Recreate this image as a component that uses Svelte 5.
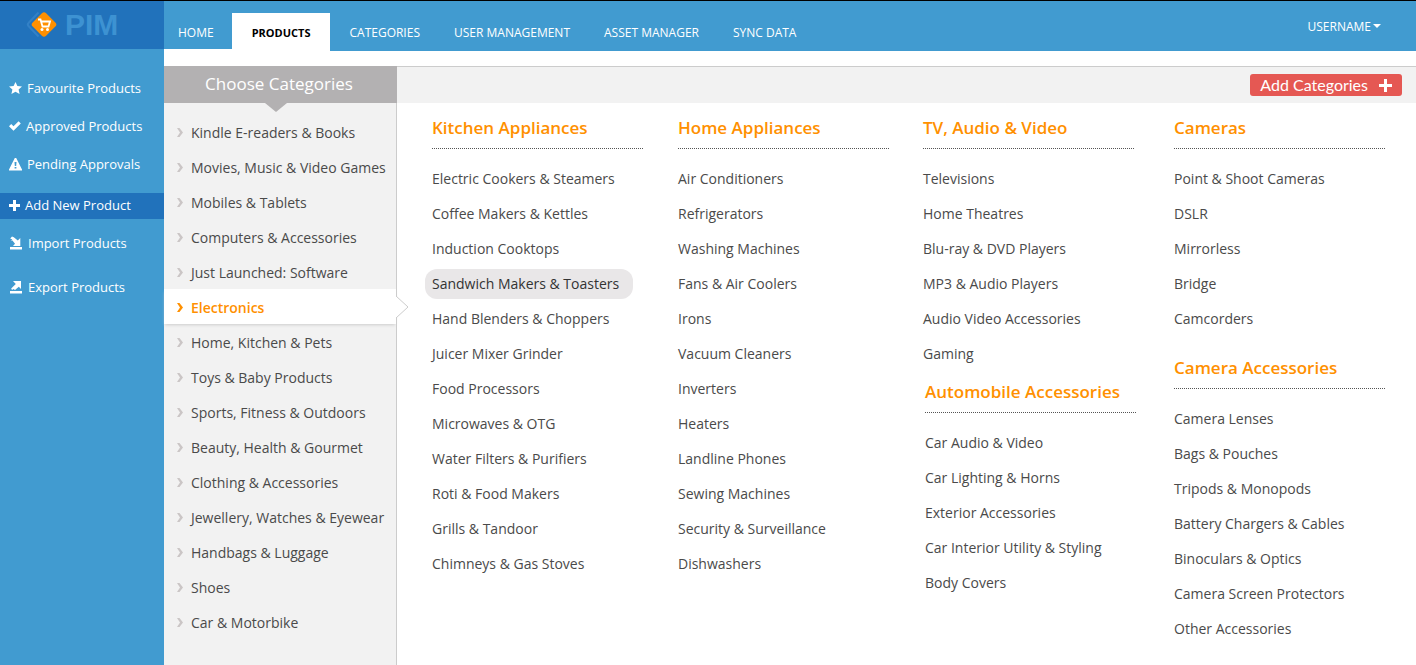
<script>
  const nav = ['HOME', 'PRODUCTS', 'CATEGORIES', 'USER MANAGEMENT', 'ASSET MANAGER', 'SYNC DATA'];
  const currentTab = 'PRODUCTS';

  const shortcutGroups = [
    [
      { icon: 'star', label: 'Favourite Products' },
      { icon: 'check', label: 'Approved Products' },
      { icon: 'warning', label: 'Pending Approvals' }
    ],
    [
      { icon: 'plus', label: 'Add New Product', active: true },
      { icon: 'import', label: 'Import Products' }
    ],
    [{ icon: 'export', label: 'Export Products' }]
  ];

  const categories = [
    'Kindle E-readers & Books',
    'Movies, Music & Video Games',
    'Mobiles & Tablets',
    'Computers & Accessories',
    'Just Launched: Software',
    'Electronics',
    'Home, Kitchen & Pets',
    'Toys & Baby Products',
    'Sports, Fitness & Outdoors',
    'Beauty, Health & Gourmet',
    'Clothing & Accessories',
    'Jewellery, Watches & Eyewear',
    'Handbags & Luggage',
    'Shoes',
    'Car & Motorbike'
  ];
  let selected = $state('Electronics');

  const columns = [
    [
      {
        title: 'Kitchen Appliances',
        items: [
          'Electric Cookers & Steamers', 'Coffee Makers & Kettles', 'Induction Cooktops',
          'Sandwich Makers & Toasters', 'Hand Blenders & Choppers', 'Juicer Mixer Grinder',
          'Food Processors', 'Microwaves & OTG', 'Water Filters & Purifiers',
          'Roti & Food Makers', 'Grills & Tandoor', 'Chimneys & Gas Stoves'
        ]
      }
    ],
    [
      {
        title: 'Home Appliances',
        items: [
          'Air Conditioners', 'Refrigerators', 'Washing Machines', 'Fans & Air Coolers', 'Irons',
          'Vacuum Cleaners', 'Inverters', 'Heaters', 'Landline Phones', 'Sewing Machines',
          'Security & Surveillance', 'Dishwashers'
        ]
      }
    ],
    [
      {
        title: 'TV, Audio & Video',
        items: [
          'Televisions', 'Home Theatres', 'Blu-ray & DVD Players', 'MP3 & Audio Players',
          'Audio Video Accessories', 'Gaming'
        ]
      },
      {
        title: 'Automobile Accessories',
        tight: true,
        items: [
          'Car Audio & Video', 'Car Lighting & Horns', 'Exterior Accessories',
          'Car Interior Utility & Styling', 'Body Covers'
        ]
      }
    ],
    [
      {
        title: 'Cameras',
        items: ['Point & Shoot Cameras', 'DSLR', 'Mirrorless', 'Bridge', 'Camcorders']
      },
      {
        title: 'Camera Accessories',
        items: [
          'Camera Lenses', 'Bags & Pouches', 'Tripods & Monopods', 'Battery Chargers & Cables',
          'Binoculars & Optics', 'Camera Screen Protectors', 'Other Accessories'
        ]
      }
    ]
  ];
  const highlighted = 'Sandwich Makers & Toasters';
</script>

{#snippet icon(name)}
  {#if name === 'star'}
    <svg width="13" height="12" viewBox="0 0 13 12"><path d="M6.5 0 8.4 3.9 13 4.4 9.6 7.5 10.6 12 6.5 9.8 2.4 12 3.4 7.5 0 4.4 4.6 3.9Z" /></svg>
  {:else if name === 'check'}
    <svg width="12" height="12" viewBox="0 0 12 12"><path d="M0 6.3 2.2 4.1 4.5 6.3 9.6 1.3 11.8 3.500 4.5 10.800Z" /></svg>
  {:else if name === 'warning'}
    <svg width="13" height="13" viewBox="0 0 13 13"><path fill-rule="evenodd" d="M5.800 0H7.200L13 11.500V12.500H0V11.500ZM5.500 4 5.800 8H7.200L7.500 4ZM5.600 9V10.600H7.400V9Z" /></svg>
  {:else if name === 'plus'}
    <svg width="11" height="11" viewBox="0 0 11 11"><path d="M4 0H7V4H11V7H7V11H4V7H0V4H4Z" /></svg>
  {:else if name === 'import'}
    <svg width="14" height="14" viewBox="0 0 14 14"><path d="M1 11H13V13.500H1ZM3 .5 4.800 1.300 8.800 4.600 11.300 2V10H4L6 7.800 3.500 4.500 2 4.800 3.300 3.400 1.200 2.600Z" /></svg>
  {:else}
    <svg width="14" height="14" viewBox="0 0 14 14"><path d="M1 11H13V13.500H1ZM4 1H12V9L9.800 6.800 6 10 4.500 9 3 10 2.200 8.500 6.800 3.900Z" /></svg>
  {/if}
{/snippet}

<div class="app">
  <aside class="sidebar">
    <a class="logo" href="#home">
      <svg width="36" height="30" viewBox="0 0 36 30" aria-hidden="true">
        <path d="M12.500 2.500 2.500 13Q1 14.500 2.500 16L12.500 26.500" fill="none" stroke="#3381c6" stroke-width="2" />
        <rect x="8.500" y="5" width="19" height="19" rx="3" transform="rotate(45 18 14.500)" fill="#ff9000" />
        <path d="M12 9.500H14.500L16.500 16.500H22.500L24 11.500H15.500" fill="none" stroke="#fff" stroke-width="1.800" />
        <circle cx="16" cy="19.500" r="1.500" fill="#fff" /><circle cx="21.500" cy="19.500" r="1.500" fill="#fff" />
      </svg>
      <span>PIM</span>
    </a>
    <nav class="shortcuts" aria-label="Shortcuts">
      {#each shortcutGroups as group}
        <ul>
          {#each group as item}
            <li><a href="#{item.icon}" class:active={item.active}>{@render icon(item.icon)}{item.label}</a></li>
          {/each}
        </ul>
      {/each}
    </nav>
  </aside>

  <div class="main">
    <header>
      <nav class="tabs" aria-label="Main">
        {#each nav as tab}
          <a href="#{tab}" class:current={tab === currentTab}>{tab}</a>
        {/each}
      </nav>
      <button class="user">USERNAME <svg width="8" height="4" viewBox="0 0 8 4"><path d="M0 0H8L4 4Z" /></svg></button>
    </header>

    <div class="browser">
      <section class="categories">
        <h1>Choose Categories</h1>
        <ul>
          {#each categories as name}
            <li class:selected={name === selected}>
              <button onclick={() => (selected = name)}>
                <svg width="6" height="9" viewBox="0 0 6 9"><path d="M0 0H2.500L6 4.500 2.500 9H0L3 4.500Z" /></svg>
                {name}
              </button>
              {#if name === selected}
                <svg class="pointer" width="13" height="22" viewBox="0 0 13 22"><path d="M0 0 12 11 0 22" /></svg>
              {/if}
            </li>
          {/each}
        </ul>
      </section>

      <section class="catalogue">
        <div class="toolbar">
          <button class="add">Add Categories
            <svg width="13" height="13" viewBox="0 0 13 13"><path d="M5 0H8V5H13V8H8V13H5V8H0V5H5Z" /></svg>
          </button>
        </div>
        <div class="columns">
          {#each columns as column}
            <div class="column">
              {#each column as group}
                <section class="group" class:tight={group.tight}>
                  <h2>{group.title}</h2>
                  <ul>
                    {#each group.items as item}
                      <li><a href="#item" class:highlighted={item === highlighted}>{item}</a></li>
                    {/each}
                  </ul>
                </section>
              {/each}
            </div>
          {/each}
        </div>
      </section>
    </div>
  </div>
</div>

<style>
  :global(body) {
    margin: 0;
    background: #fff;
  }
  .app {
    display: grid;
    grid-template-columns: 164px 1fr;
    min-height: 100vh;
    box-sizing: border-box;
    border-top: 1px solid #000;
    font-family: "Open Sans", "Noto Sans", sans-serif;
    font-size: 14px;
    color: #4a4a4a;
  }
  ul {
    margin: 0;
    padding: 0;
    list-style: none;
  }
  a {
    color: inherit;
    text-decoration: none;
  }
  button {
    border: 0;
    padding: 0;
    background: none;
    color: inherit;
    font: inherit;
    cursor: pointer;
  }
  svg {
    flex: none;
    fill: currentColor;
  }

  .sidebar {
    background: #419bd0;
    color: #fff;
  }
  .logo {
    display: flex;
    align-items: center;
    gap: 3px;
    height: 48px;
    padding-left: 26px;
    background: #2172bb;
    color: #3d92d2;
    font: bold 30px/50px "Liberation Sans", Arial, sans-serif;
  }
  .shortcuts {
    display: flex;
    flex-direction: column;
    padding-top: 27px;
    gap: 16px;
    font-size: 13px;
    font-weight: 500;
  }
  .shortcuts ul {
    display: flex;
    flex-direction: column;
    gap: 12px;
  }
  .shortcuts ul:first-child {
    margin-bottom: -1px;
  }
  .shortcuts ul:last-child {
    margin-top: 2px;
  }
  .shortcuts a {
    box-sizing: border-box;
    display: flex;
    align-items: center;
    gap: 5px;
    height: 26px;
    padding: 0 0 2px 9px;
  }
  .shortcuts .active {
    background: #2172bb;
  }

  .main {
    display: flex;
    flex-direction: column;
    min-width: 0;
  }
  header {
    display: flex;
    justify-content: space-between;
    height: 50px;
    background: #419bd0;
    color: #fff;
    font-size: 12px;
  }
  .tabs {
    display: flex;
  }
  .tabs a {
    box-sizing: border-box;
    padding: 12px 17px 0;
    line-height: 40px;
  }
  .tabs a:first-child {
    padding: 12px 18px 0 14px;
    border-bottom: 2px solid #fff;
  }
  .tabs .current {
    margin: 12px 2px 0 0;
    padding: 0 20px;
    background: #fff;
    color: #000;
    font-size: 11px;
    font-weight: bold;
  }
  .user {
    display: flex;
    align-items: center;
    gap: 2px;
    margin-right: 35px;
  }

  .browser {
    flex: 1;
    display: grid;
    grid-template-columns: 233px 1fr;
    margin-top: 15px;
  }
  .categories {
    box-sizing: border-box;
    border-right: 1px solid #ccc;
    background: #f2f2f2;
  }
  h1 {
    position: relative;
    box-sizing: border-box;
    height: 37px;
    margin: 0 -1px 11px 0;
    padding-right: 3px;
    background: #b3b1b2;
    color: #fff;
    font-size: 17px;
    font-weight: 400;
    line-height: 35px;
    text-align: center;
  }
  h1::after {
    content: "";
    position: absolute;
    top: 100%;
    left: 101px;
    border: 11px solid transparent;
    border-top: 9px solid #b3b1b2;
    border-bottom: 0;
  }
  .categories li {
    position: relative;
  }
  .categories button {
    box-sizing: border-box;
    display: flex;
    align-items: center;
    gap: 8px;
    width: 100%;
    height: 35px;
    padding: 2px 0 0 13px;
    white-space: nowrap;
  }
  .categories button svg {
    color: #cbc6c6;
  }
  .selected {
    background: #fff;
    color: #ff9000;
    box-shadow: 0 2px 3px -1px #ccc;
  }
  .selected button {
    font-weight: 600;
  }
  .categories .selected button svg {
    color: #ff9000;
  }
  .pointer {
    position: absolute;
    left: 100%;
    top: 7px;
    fill: #fff;
    stroke: #ccc;
  }

  .toolbar {
    display: flex;
    justify-content: flex-end;
    align-items: center;
    box-sizing: border-box;
    height: 37px;
    padding-right: 14px;
    border-top: 1px solid #ccc;
    background: #f2f2f2;
  }
  .add {
    display: flex;
    align-items: center;
    gap: 11px;
    height: 22px;
    padding: 0 10px;
    border-radius: 3px;
    background: #e55853;
    color: #fff;
    font-family: Lato, "Open Sans", sans-serif;
    font-size: 16px;
    line-height: 20px;
  }
  .columns {
    display: grid;
    grid-template-columns: 246fr 245fr 251fr 242fr;
    padding: 13px 0 0 35px;
  }
  .group + .group {
    margin-top: 20px;
  }
  .group + .tight {
    margin: 9px 0 0 2px;
  }
  h2 {
    max-width: 211px;
    margin: 0 0 12px;
    padding-bottom: 10px;
    background: repeating-linear-gradient(90deg, #555 0 1px, transparent 1px 2px) bottom / 100% 1px no-repeat;
    color: #ff9000;
    font-size: 17px;
    font-weight: 600;
    line-height: 23px;
  }
  .columns li {
    display: flex;
    align-items: center;
    height: 35px;
    white-space: nowrap;
  }
  .highlighted {
    margin-left: -7px;
    padding: 0 14px 0 7px;
    border-radius: 12px;
    background: #e9e7e8;
    color: #333;
    line-height: 30px;
  }
</style>
